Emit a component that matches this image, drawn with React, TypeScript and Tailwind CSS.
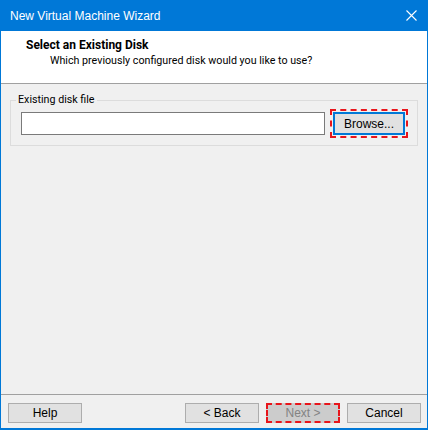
import React from "react";

const font = { fontFamily: '"Liberation Sans", Arial, sans-serif' };
const bodyFont = { fontFamily: 'Roboto, "Liberation Sans", Arial, sans-serif' };

const WinButton = ({
  children,
  className = "",
}: {
  children: React.ReactNode;
  className?: string;
}) => (
  <button
    className={`h-[20px] w-[74px] border border-[#adadad] bg-[#e1e1e1] text-[12px] leading-none text-black ${className}`}
  >
    {children}
  </button>
);

export default function App() {
  return (
    <div
      className="flex h-[430px] w-[428px] flex-col border-x border-b-2 border-[#0078d7] bg-[#f0f0f0] text-[12px] text-black"
      style={font}
    >
      {/* title bar */}
      <div className="flex h-[31px] shrink-0 items-center justify-between bg-[#0078d7] pl-[9px] pr-[10px] text-white">
        <span className="text-[12px]">New Virtual Machine Wizard</span>
        <svg width="11" height="11" viewBox="0 0 11 11" className="mt-[-1px]">
          <path d="M0.5 0.5 L10.5 10.5 M10.5 0.5 L0.5 10.5" stroke="white" strokeWidth="1.1" />
        </svg>
      </div>

      {/* header */}
      <div
        className="flex h-[53px] shrink-0 flex-col border-b border-[#a0a0a0] bg-white pl-[25px] pt-[6px]"
        style={bodyFont}
      >
        <div className="text-[12px] font-bold leading-[16px]">Select an Existing Disk</div>
        <div className="pl-[24px] text-[10.7px] leading-[16px]">
          Which previously configured disk would you like to use?
        </div>
      </div>

      {/* body */}
      <div className="flex-1 pt-[8px]">
        <fieldset className="mx-[9px] border border-[#dcdcdc] pb-[10px] pl-[5px] pr-[9px] pt-[4px]">
          <legend className="px-[2px] text-[10.7px] leading-[16px]" style={bodyFont}>
            Existing disk file
          </legend>
          <div className="flex items-center">
            <div className="ml-[5px] h-[23px] w-[304px] border border-[#7a7a7a] bg-white" />
            <button className="ml-[8px] h-[23px] w-[72px] border-2 border-[#0078d7] bg-[#e1e1e1] text-[12px] leading-none outline-2 outline-offset-[1px] outline-dashed outline-[#e8151b]">
              Browse...
            </button>
          </div>
        </fieldset>
      </div>

      {/* footer */}
      <div className="flex h-[34px] shrink-0 items-start border-t border-[#a0a0a0] pl-[7px] pr-[6px] pt-[8px]">
        <WinButton>Help</WinButton>
        <div className="flex-1" />
        <WinButton>&lt; Back</WinButton>
        <button className="ml-[7px] h-[20px] w-[74px] border-2 border-dashed border-[#e8151b] bg-[#cccccc] text-[12px] leading-none text-[#838383]">
          Next &gt;
        </button>
        <WinButton className="ml-[7px]">Cancel</WinButton>
      </div>
    </div>
  );
}
